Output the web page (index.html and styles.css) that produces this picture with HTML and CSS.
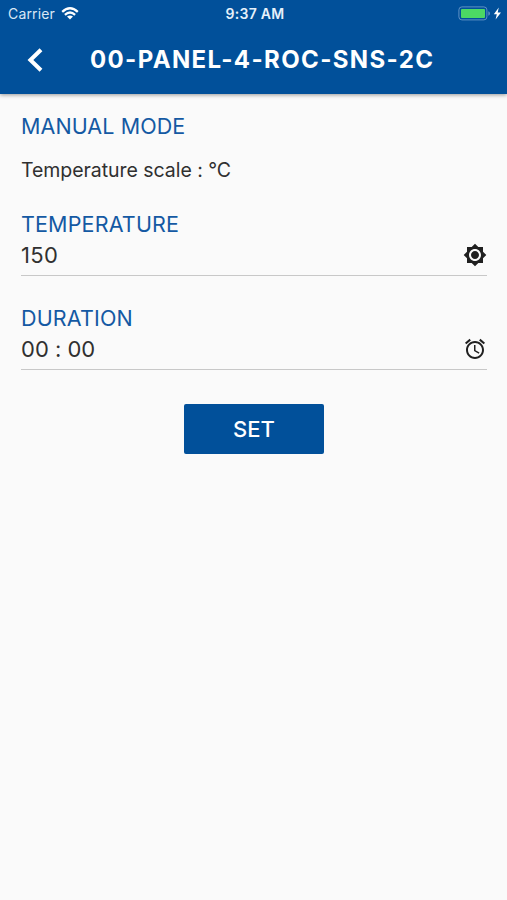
FILE: index.html
```html
<!DOCTYPE html>
<html lang="en">
<head>
<meta charset="utf-8">
<title>Manual Mode</title>
<link rel="stylesheet" href="styles.css">
</head>
<body>
<header class="header">
  <div class="status">
    <div class="carrier"><span>Carrier</span>
      <svg class="wifi" viewBox="0 0 18 13" width="18" height="13"><g fill="none" stroke="#fff" stroke-width="2.3"><path d="M1.2 4.8Q9-2.2 16.8 4.8"/><path d="M3.9 7.8Q9 3.3 14.1 7.8"/></g><path d="M6 9.6Q9 7.4 12 9.6L9 12.6Z" fill="#fff"/></svg>
    </div>
    <time class="clock">9:37 AM</time>
    <svg class="battery" viewBox="0 0 44 15" width="44" height="15"><rect x=".9" y=".9" width="28" height="13" rx="3" fill="none" stroke="#5f91c4"/><rect x="3" y="3" width="24" height="9" rx="1" fill="#4cd964"/><path d="M30.3 5.2q1.7.6 1.7 2.3t-1.7 2.3z" fill="#5f91c4"/><path d="M40.8 1.5L35.8 8.3h3L37.6 13.5 43 6.4h-3.3z" fill="#fff"/></svg>
  </div>
  <div class="bar">
    <svg class="back" viewBox="0 0 16 24" width="16" height="24"><path d="M14 1.7L3.4 12 14 22.3" fill="none" stroke="#fff" stroke-width="4"/></svg>
    <h1 class="title">00-PANEL-4-ROC-SNS-2C</h1>
  </div>
</header>
<main class="content">
  <h2 class="label">MANUAL MODE</h2>
  <p class="scale">Temperature scale : °C</p>
  <section class="field">
    <h2 class="label wide">TEMPERATURE</h2>
    <div class="row"><span class="value degrees">150</span>
      <svg class="icon" viewBox="0 0 24 24" width="24" height="24"><path d="M20 8.69V4h-4.69L12 .69 8.69 4H4v4.69L.69 12 4 15.31V20h4.69L12 23.31 15.31 20H20v-4.69L23.31 12 20 8.69zM12 18c-3.31 0-6-2.69-6-6s2.69-6 6-6 6 2.69 6 6-2.69 6-6 6zm0-10c-2.21 0-4 1.79-4 4s1.79 4 4 4 4-1.79 4-4-1.79-4-4-4z"/></svg>
    </div>
  </section>
  <section class="field">
    <h2 class="label wide">DURATION</h2>
    <div class="row"><span class="value">00 : 00</span>
      <svg class="icon" viewBox="0 0 24 24" width="24" height="24"><path d="M22 5.72l-4.6-3.86-1.29 1.53 4.6 3.86L22 5.72zM7.88 3.39L6.6 1.86 2 5.71l1.29 1.53 4.59-3.85zM12.5 8H11v6l4.75 2.85.75-1.23-4-2.37V8zM12 4c-4.97 0-9 4.03-9 9s4.02 9 9 9c4.97 0 9-4.03 9-9s-4.03-9-9-9zm0 16c-3.87 0-7-3.13-7-7s3.13-7 7-7 7 3.13 7 7-3.13 7-7 7z"/></svg>
    </div>
  </section>
  <button class="set">SET</button>
</main>
</body>
</html>
```
FILE: styles.css
```css
* { box-sizing: border-box; }
body {
  margin: 0;
  min-height: 900px;
  background: #fafafa;
  color: #303030;
  font-family: Inter, "Liberation Sans", sans-serif;
}
h1, h2, p { margin: 0; font-weight: 400; }
svg { display: block; flex: none; }
.header {
  height: 94px;
  background: #01509a;
  color: #fff;
  box-shadow: 0 1px 4px rgba(0, 0, 0, .4);
}
.status {
  display: grid;
  grid-template-columns: 1fr auto 1fr;
  align-items: center;
  height: 27px;
  padding: 0 5px 0 8px;
  font-size: 14px;
}
.carrier { display: flex; align-items: center; gap: 6px; color: #d9e7f5; letter-spacing: .15px; }
.clock { font-weight: 600; color: #e6f0fa; letter-spacing: .3px; }
.battery { justify-self: end; }
.bar { display: flex; align-items: center; height: 66px; padding-left: 27px; }
.title {
  margin-left: 47px;
  font-size: 24px;
  line-height: 30px;
  font-weight: 700;
  letter-spacing: 1.37px;
  white-space: nowrap;
}
.content { display: flex; flex-direction: column; padding: 17px 20px 0 21px; }
.label { font-size: 21.5px; line-height: 30px; color: #1459a3; letter-spacing: .08px; }
.wide { letter-spacing: .16px; }
.scale { margin: 14px 0 24px; font-size: 19.5px; line-height: 30px; letter-spacing: -.05px; }
.field { margin-bottom: 27px; }
.row {
  display: flex;
  justify-content: space-between;
  height: 37px;
  border-bottom: 1px solid #c8c8c8;
}
.value { font-size: 22px; line-height: 32px; font-feature-settings: "calt" 0; }
.degrees { letter-spacing: .3px; }
.icon { margin-top: 4px; fill: #202020; }
.set {
  align-self: center;
  width: 140px;
  height: 50px;
  margin-top: 7px;
  padding: 0;
  border: 0;
  border-radius: 2px;
  background: #01509a;
  color: #fff;
  font: 500 22px/50px Inter, sans-serif;
}
```
